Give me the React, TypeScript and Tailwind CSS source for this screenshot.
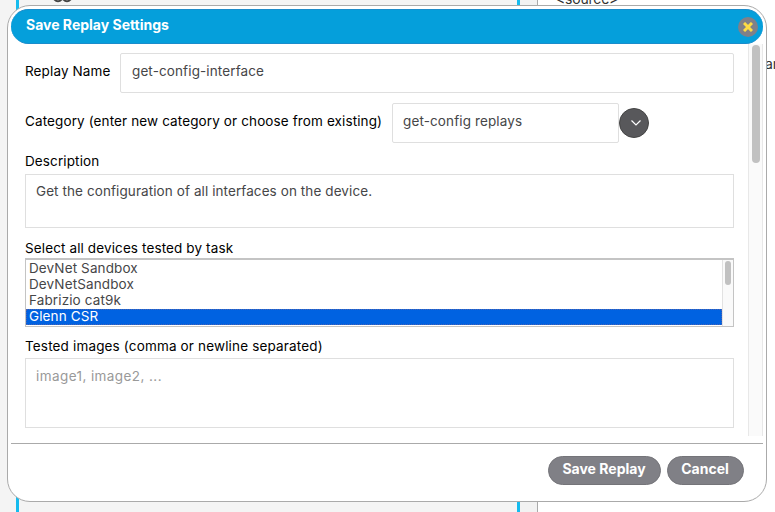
import React from "react";

const devices = ["DevNet Sandbox", "DevNetSandbox", "Fabrizio cat9k", "Glenn CSR"];

function Backdrop() {
  return (
    <div className="flex h-full w-full">
      <div className="w-4 bg-[#f4f4f4]" />
      <div className="relative w-[504px] border-x-[3px] border-[#15bbee] bg-[#f4f4f4]">
        <svg className="absolute left-[34px] top-0 h-[3px] w-5" viewBox="0 0 20 3" fill="none" stroke="#444" strokeWidth="2">
          <path d="M1 -1Q5 3.5 9 -1M10 -1Q14 3.5 18 -1" />
        </svg>
      </div>
      <div className="w-[18px] border-r border-[#aaa] bg-[#f2f2f2]" />
      <div className="relative flex-1 bg-white text-[14px] leading-4 text-[#333]">
        <span className="absolute left-[18px] top-[-9px] tracking-[-0.2px]">&lt;source&gt;</span>
        <span className="absolute left-[227px] top-[56px]">an</span>
      </div>
    </div>
  );
}

function Header() {
  return (
    <div className="flex h-[35px] shrink-0 items-center justify-between rounded-full border-y border-[#1a8ccb] bg-[#059fdb] pl-[15px] pr-[5px]">
      <h1 className="pb-[3px] text-[14px] font-bold leading-4 text-white">Save Replay Settings</h1>
      <button className="flex size-5 items-center justify-center rounded-full bg-[#808088]" aria-label="Close">
        <svg className="size-[10px]" viewBox="0 0 10 10" stroke="#fddc45" strokeWidth="3">
          <path d="M1 1L9 9M9 1L1 9" />
        </svg>
      </button>
    </div>
  );
}

function Form() {
  return (
    <div className="flex-1 pl-[14px] pr-[14px] pt-[8.5px] text-[13.5px] leading-4 tracking-[0.12px] text-black">
      <div className="flex h-10 items-center">
        <label className="w-[95.4px] pb-[4px]">Replay Name</label>
        <div className="flex h-10 flex-1 items-center rounded-[2px] border border-[#dfdfdf] px-[10.6px] pb-[3px] text-[#464648]">get-config-interface</div>
      </div>
      <div className="mt-[10px] flex h-10 items-center">
        <label className="w-[367px] whitespace-nowrap pb-[4px]">Category (enter new category or choose from existing)</label>
        <div className="flex h-10 w-[227.4px] items-center rounded-[2px] border border-[#dfdfdf] px-[10px] pb-[4px] text-[#464648]">get-config replays</div>
        <button className="flex size-[30px] items-center justify-center rounded-full border border-[#444] bg-[#58585b] pl-[4px]" aria-label="Choose category">
          <svg className="h-[6px] w-[10px]" viewBox="0 0 10 6" fill="none" stroke="white" strokeWidth="1.2"><path d="M.5 .5L5 5L9.5 .5" /></svg>
        </button>
      </div>
      <label className="mt-[10px] block">Description</label>
      <div className="mt-[5px] h-[54px] border border-[#dfdfdf] px-[10px] pt-[8px] tracking-[0.09px] text-[#464648]">Get the configuration of all interfaces on the device.</div>
      <label className="mt-[12.5px] block">Select all devices tested by task</label>
      <div className="mt-[2px] flex h-[68.5px] border border-t-2 border-[#c4c4c4]">
        <div className="flex-1 pt-px text-[#464648]">
          {devices.map((name) => (
            <div key={name} className={name === "Glenn CSR" ? "h-4 bg-[#0062e1] pl-[3px] leading-[14px] text-white outline-1 outline-dotted -outline-offset-1 outline-[#4d63b0]" : "h-4 pl-[3px] leading-[15px]"}>{name}</div>
          ))}
        </div>
        <div className="flex w-[11px] justify-center border-l border-[#e2e2e2] bg-[#fafafa] pt-px">
          <div className="h-6 w-[6px] rounded-full bg-[#c1c1c1]" />
        </div>
      </div>
      <label className="mt-[11px] block tracking-[0.16px]">Tested images (comma or newline separated)</label>
      <div className="mt-1 h-[70px] border border-[#dfdfdf] px-[10px] pt-[9px] tracking-[0.42px] text-[#999]">image1, image2, ...</div>
    </div>
  );
}

function Footer() {
  return (
    <div className="mt-[7px] flex flex-1 items-start justify-end gap-[6px] border-t border-[#aaa] pr-[19.5px] pt-[11.5px] text-[14px] font-bold leading-4 text-white">
      <button className="h-[29px] w-[113px] rounded-full border border-[#747479] bg-[#808086] pb-[2px]">Save Replay</button>
      <button className="h-[29px] w-[77px] rounded-full border border-[#747479] bg-[#808086] pb-[2px]">Cancel</button>
    </div>
  );
}

export default function App() {
  return (
    <div className="relative h-[512px] w-[775px] overflow-hidden font-['Inter','Liberation_Sans',sans-serif]">
      <Backdrop />
      <div className="absolute left-[7px] top-[5px] flex h-[497px] w-[760px] flex-col rounded-[23px] border border-[#aaa] bg-white p-[3px]">
        <Header />
        <div className="flex h-[392px] shrink-0">
          <Form />
          <div className="flex w-[15px] justify-center border-x border-[#e8e8e8] bg-[#fafafa] pt-[1px]">
            <div className="h-[118px] w-2 rounded-full bg-[#c1c1c1]" />
          </div>
        </div>
        <Footer />
      </div>
    </div>
  );
}
